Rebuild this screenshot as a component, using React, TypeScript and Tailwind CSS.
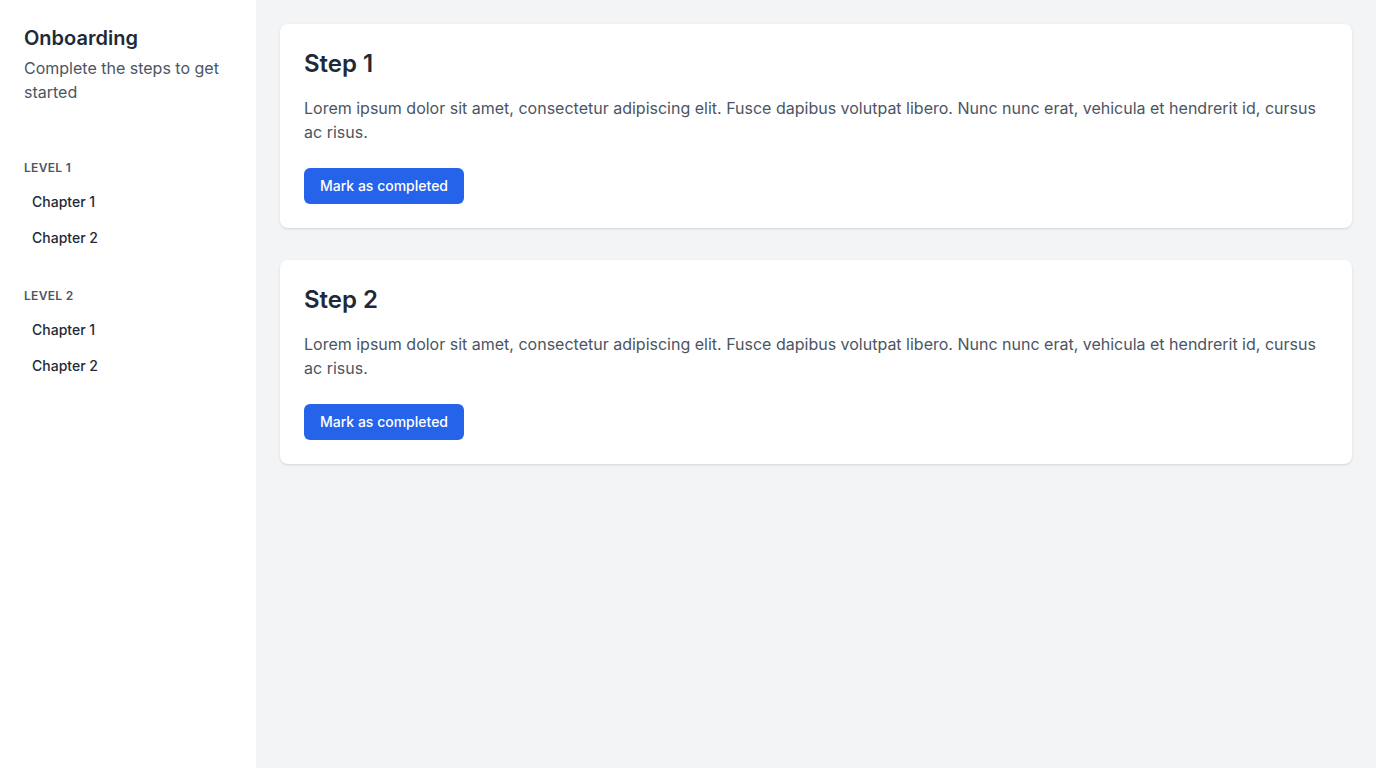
import React from 'react';

const levels = [
  { name: 'Level 1', chapters: ['Chapter 1', 'Chapter 2'] },
  { name: 'Level 2', chapters: ['Chapter 1', 'Chapter 2'] },
];

const steps = ['Step 1', 'Step 2'];

const lorem =
  'Lorem ipsum dolor sit amet, consectetur adipiscing elit. Fusce dapibus volutpat libero. Nunc nunc erat, vehicula et hendrerit id, cursus ac risus.';

export default function App() {
  return (
    <div className="flex min-h-screen bg-[#f3f4f6]" style={{ fontFamily: 'Inter, sans-serif' }}>
      <aside className="w-64 shrink-0 bg-white p-6">
        <h1 className="text-xl font-semibold text-[#1f2937]">Onboarding</h1>
        <p className="mt-1 text-base text-[#4b5563]">Complete the steps to get started</p>
        <nav className="mt-14 space-y-8">
          {levels.map((level) => (
            <div key={level.name}>
              <h2 className="mb-2 text-xs font-semibold uppercase tracking-wide text-[#4b5563]">{level.name}</h2>
              <ul>
                {level.chapters.map((ch) => (
                  <li key={ch}>
                    <a href="#" className="block px-2 py-2 text-sm font-medium text-[#1f2937]">
                      {ch}
                    </a>
                  </li>
                ))}
              </ul>
            </div>
          ))}
        </nav>
      </aside>
      <main className="flex-1 p-6">
        <div className="space-y-8">
          {steps.map((step) => (
            <div key={step} className="rounded-lg bg-white p-6 shadow">
              <h2 className="mb-4 text-2xl font-semibold text-[#1f2937]">{step}</h2>
              <p className="text-base text-[#4b5563]">{lorem}</p>
              <button className="mt-6 rounded-md bg-[#2563eb] px-4 py-2 text-sm font-medium text-white">
                Mark as completed
              </button>
            </div>
          ))}
        </div>
      </main>
    </div>
  );
}
